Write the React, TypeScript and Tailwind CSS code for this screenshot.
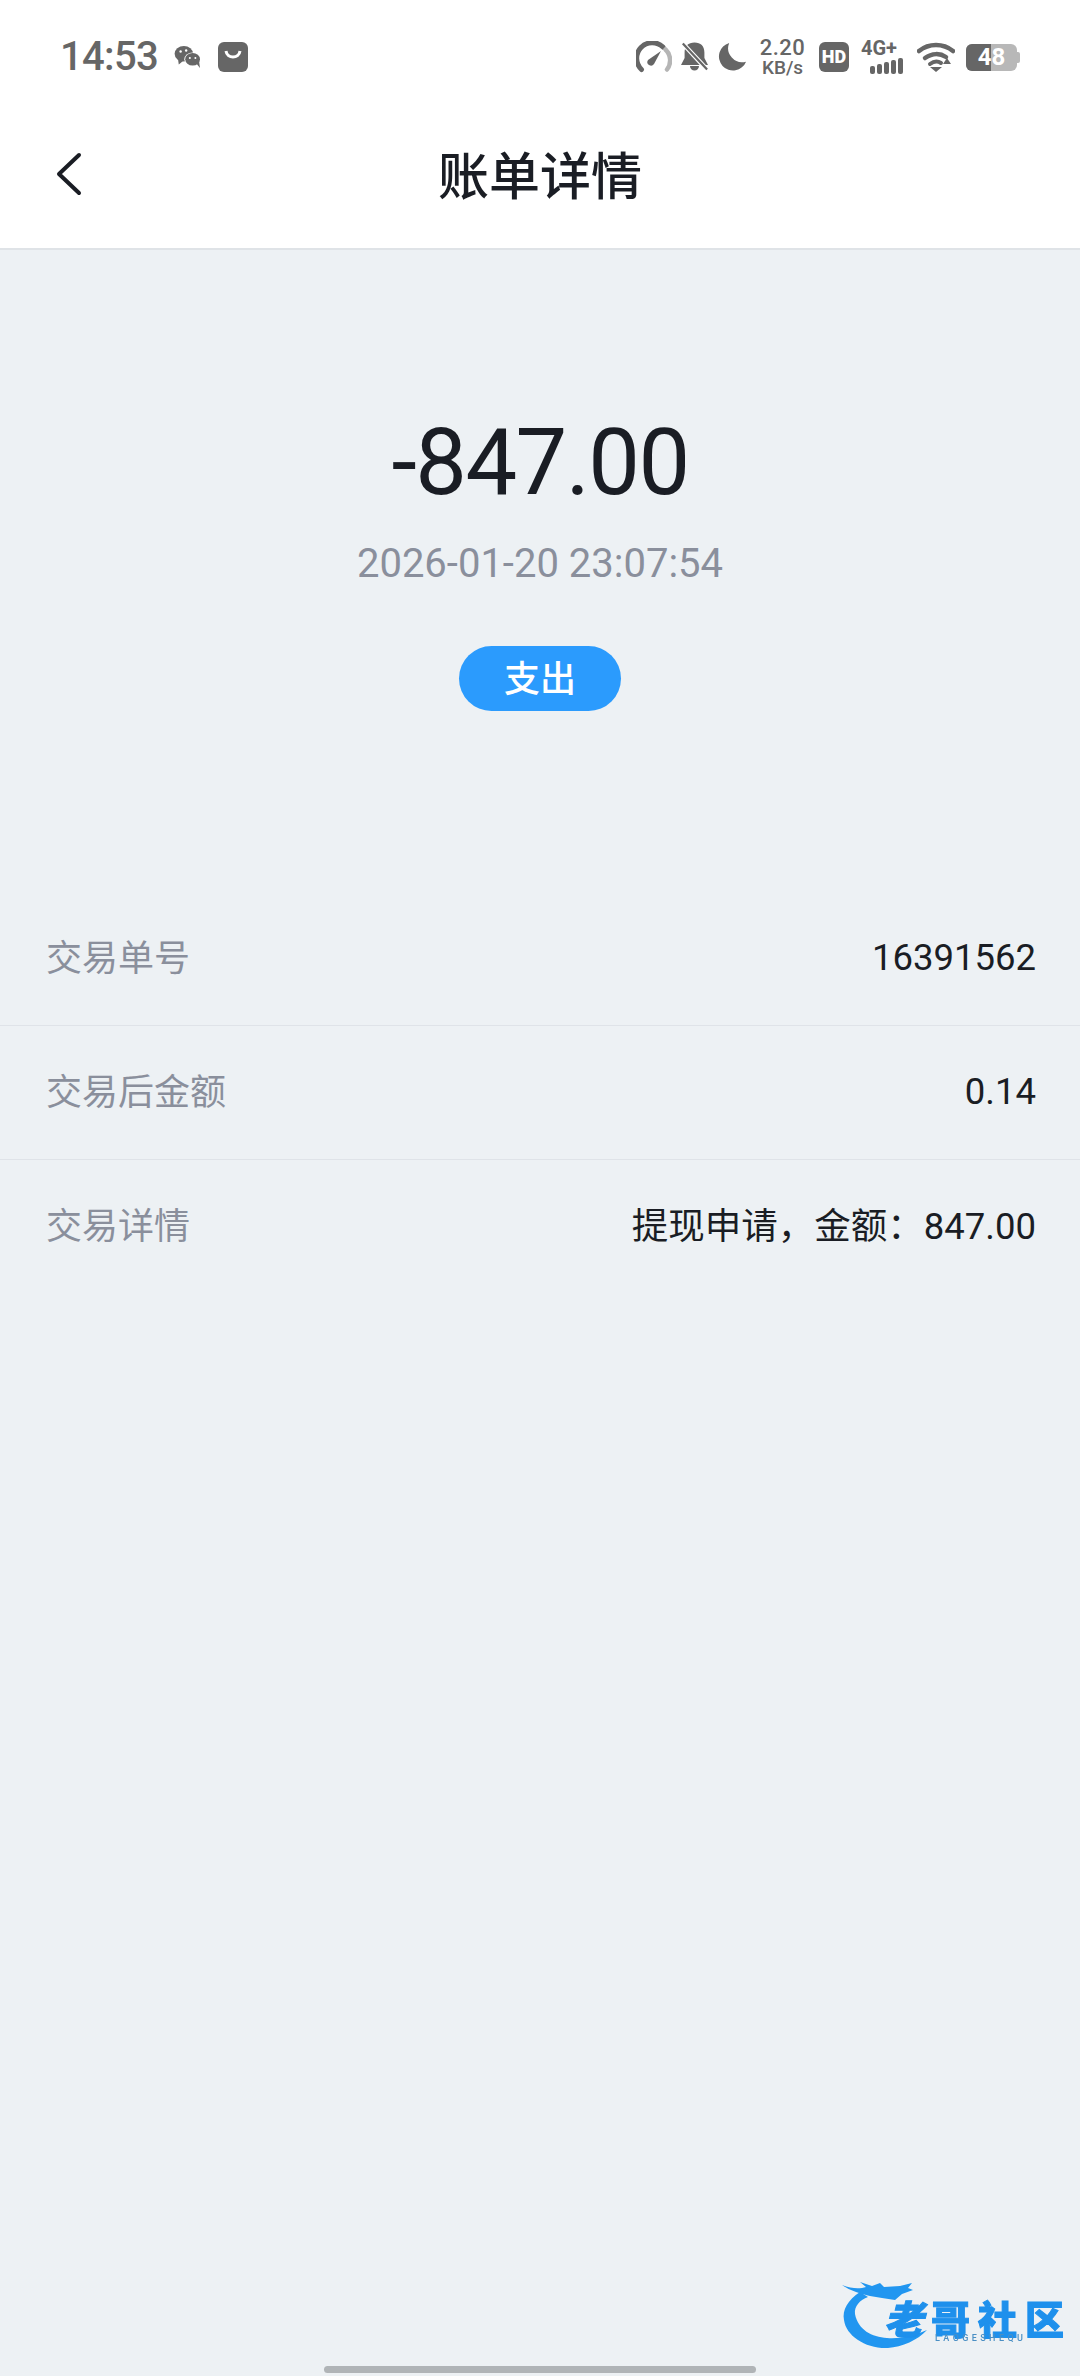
import React from "react";

const CJK = "font-['Roboto','Noto_Sans_CJK_SC',sans-serif]";

const rows = [
  { label: "交易单号", value: "16391562" },
  { label: "交易后金额", value: "0.14" },
  { label: "交易详情", value: "提现申请，金额：847.00" },
];

const WeChatIcon = () => (
  <svg width="28" height="24" viewBox="0 0 30 26" fill="#666">
    <ellipse cx="10.5" cy="9.5" rx="10" ry="8.5" />
    <path d="M4 14l1 7 5-4z" />
    <ellipse cx="20" cy="15.5" rx="9" ry="7.5" fill="#fff" />
    <ellipse cx="20" cy="15.5" rx="8" ry="6.8" />
    <path d="M24 20l4 5-1-7z" />
    <circle cx="7" cy="7" r="1.3" fill="#fff" />
    <circle cx="13" cy="6" r="1.3" fill="#fff" />
    <circle cx="17" cy="14" r="1.1" fill="#fff" />
    <circle cx="23" cy="14" r="1.1" fill="#fff" />
  </svg>
);

const StoreIcon = () => (
  <svg width="30" height="30" viewBox="0 0 30 30">
    <rect width="30" height="30" rx="6" fill="#666" />
    <path d="M8 9c1 8 13 8 14 0" fill="none" stroke="#fff" strokeWidth="3" />
  </svg>
);

const StatusIcons = () => (
  <div className="flex items-center">
    <svg width="36" height="32" viewBox="0 0 36 32" fill="none">
      <path d="M5.5 28.5A15 15 0 0 1 27 6" stroke="#666" strokeWidth="5" strokeLinecap="round" />
      <path d="M29.5 8.5A15 15 0 0 1 31 28.5" stroke="#b5b5b5" strokeWidth="4.5" strokeLinecap="round" />
      <path d="M12 19l13-9-7 13a3.6 3.6 0 0 1-6-4z" fill="#666" />
    </svg>
    <svg width="27" height="32" viewBox="0 0 30 32" className="ml-[9px]">
      <path d="M15 0c7 0 11 4 11 11v6l4 8H0l4-8v-6C4 4 8 0 15 0zM10 26h10a5 5 0 0 1-10 0z" fill="#666" />
      <path d="M2 1l27 29" stroke="#fff" strokeWidth="5" />
      <path d="M2 1l27 29" stroke="#666" strokeWidth="2.5" />
    </svg>
    <svg width="30" height="30" viewBox="0 0 32 32" className="ml-[9px]">
      <path d="M13 1a15 15 0 1 0 18 20A15 15 0 0 1 13 1z" fill="#666" />
    </svg>
    <div className="ml-[13px] flex w-[45px] flex-col items-center font-['Roboto',sans-serif] font-medium text-[#666]">
      <span className="h-[20px] text-[22px] leading-[20px] tracking-[0.5px]">2.20</span>
      <span className="mt-[1px] h-[18px] text-[19px] leading-[18px]">KB/s</span>
    </div>
    <div className="ml-[14px] flex h-[30px] w-[30px] items-center justify-center rounded-[6px] bg-[#666] font-['Roboto',sans-serif] text-[18px] leading-none font-black text-white">
      HD
    </div>
    <div className="ml-[12px] flex w-[44px] flex-col">
      <span className="h-[17px] font-['Roboto',sans-serif] text-[20px] leading-[17px] font-bold text-[#666]">4G+</span>
      <div className="ml-[9px] mt-[1px] flex h-[16px] items-end gap-[2px]">
        <span className="h-[8px] w-[5px] rounded-[2px] bg-[#666]" />
        <span className="h-[10px] w-[5px] rounded-[2px] bg-[#666]" />
        <span className="h-[12px] w-[5px] rounded-[2px] bg-[#666]" />
        <span className="h-[14px] w-[5px] rounded-[2px] bg-[#666]" />
        <span className="h-[16px] w-[5px] rounded-[2px] bg-[#666]" />
      </div>
    </div>
    <svg width="38" height="30" viewBox="0 0 38 30" fill="none" className="ml-[12px]">
      <path d="M2 9c10-8 24-8 34 0" stroke="#666" strokeWidth="4.5" strokeLinecap="round" />
      <path d="M8 16c7-5 15-5 21-1" stroke="#666" strokeWidth="4.5" strokeLinecap="round" />
      <path d="M13 22c4-3 8-3 11-1" stroke="#666" strokeWidth="4" strokeLinecap="round" />
      <path d="M13 25h12l-6 5z" fill="#666" />
      <path d="M30 16l4 6h-8z" fill="#666" />
    </svg>
    <div className="relative ml-[11px] flex h-[27px] w-[51px] overflow-hidden rounded-[6px] bg-[#b8b8b8]">
      <span className="h-full w-[25px] bg-[#666]" />
      <span className="absolute inset-0 text-center font-['Roboto',sans-serif] text-[24px] leading-[27px] font-bold text-white">48</span>
    </div>
    <span className="h-[11px] w-[3px] rounded-r-[2px] bg-[#b8b8b8]" />
  </div>
);

const Logo = () => (
  <div className="absolute left-[840px] top-[2278px] h-[72px] w-[225px] blur-[0.6px]">
    <svg width="90" height="72" viewBox="0 0 90 72" fill="#2196f0" className="absolute left-0 top-0">
      <path d="M20 14C8 22 2 32 4 42c2 16 22 29 44 28 14-1 30-8 39-18-13 6-27 9-40 8-15-1-29-8-32-24-1-8 5-14 13-17z" />
      <path d="M2 7c10 4 18 4 24 2l-6-5 12 4 8-3 4 4 16-1 12-3-4 5 5 2-11 4-7 6-13-2-12-2C22 16 10 13 2 7z" />
    </svg>
    <div className="absolute left-[44px] top-[23px] flex h-[32px] w-[180px] justify-between font-['Noto_Sans_CJK_SC',sans-serif] text-[39px] leading-[32px] font-black text-[#1e90ec] [-webkit-text-stroke:1px_#1e90ec]">
      <span className="italic">老</span>
      <span>哥</span>
      <span>社</span>
      <span>区</span>
    </div>
    <div className="absolute left-[95px] top-[56px] font-['Roboto',sans-serif] text-[9px] leading-[9px] font-medium tracking-[3.4px] text-[#4a8fc4]">
      LAOGESHEQU
    </div>
  </div>
);

export default function App() {
  return (
    <div className={`relative flex h-[2376px] w-[1080px] flex-col overflow-hidden bg-[#edf1f4] ${CJK}`}>
      <div className="bg-white">
        <div className="flex h-[112px] items-center justify-between pl-[60px] pr-[60px] pt-[2px]">
          <div className="flex items-center">
            <span className="text-[40px] leading-none font-medium tracking-[-0.7px] text-[#666]">14:53</span>
            <div className="ml-[16px]"><WeChatIcon /></div>
            <div className="ml-[16px]"><StoreIcon /></div>
          </div>
          <StatusIcons />
        </div>
        <div className="relative flex h-[138px] items-center justify-center border-b-2 border-[#dfe3e7] pb-[6px]">
          <svg width="28" height="44" viewBox="0 0 28 44" fill="none" className="absolute left-[55px] top-[40px]">
            <path d="M24 3L4 22l20 19" stroke="#1a1d24" strokeWidth="4" strokeLinecap="round" strokeLinejoin="round" />
          </svg>
          <span className="text-[51px] leading-none font-medium text-[#1a1d24]">账单详情</span>
        </div>
      </div>

      <div className="flex flex-col items-center pt-[163px]">
        <div className="text-[92px] leading-[100px] tracking-[-1.6px] text-[#1a1d24]">-847.00</div>
        <div className="mt-[26px] text-[40px] leading-[50px] text-[#8a8f9c]">2026-01-20 23:07:54</div>
        <div className="mt-[57px] flex h-[65px] w-[162px] items-center justify-center rounded-full bg-[#2b9bfd] pt-[3px] text-[36px] font-medium text-white">
          支出
        </div>
      </div>

      <div className="mt-[181px] flex flex-col">
        {rows.map((row, i) => (
          <div
            key={row.label}
            className={`flex h-[134px] items-center justify-between pl-[46px] pr-[44px] ${i < rows.length - 1 ? "border-b border-[#dfe3e8]" : ""}`}
          >
            <span className="text-[36px] text-[#8a8f9c]">{row.label}</span>
            <span className="text-[36.5px] text-[#1a1d24]">{row.value}</span>
          </div>
        ))}
      </div>

      <Logo />
      <div className="absolute bottom-[3px] left-[324px] h-[7px] w-[432px] rounded-full bg-[#b0b4b7]" />
    </div>
  );
}
